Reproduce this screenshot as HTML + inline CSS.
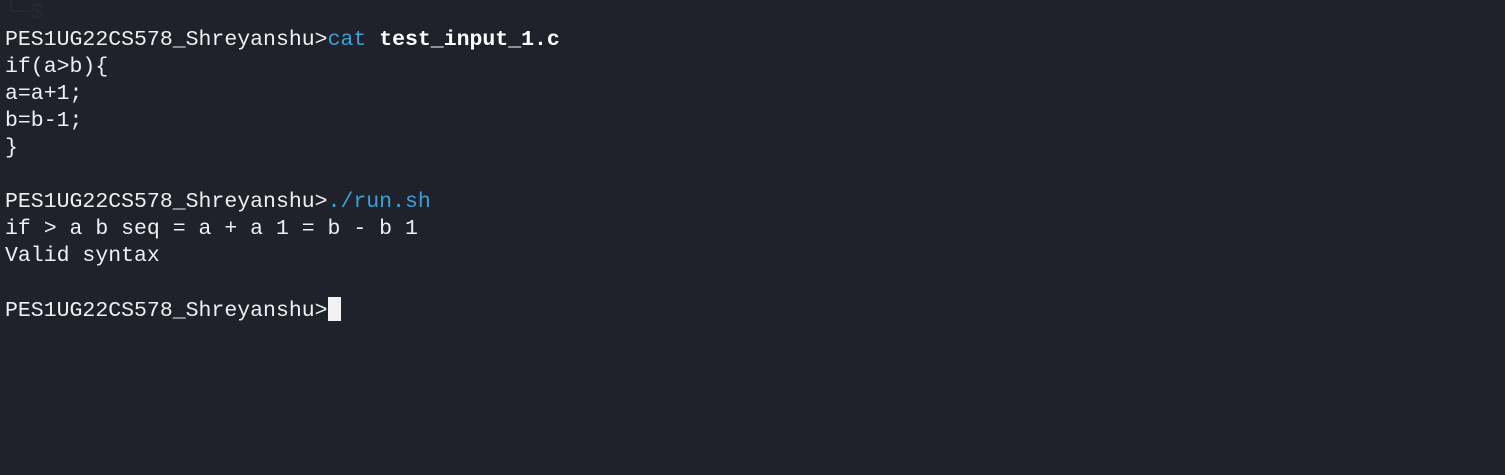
<!DOCTYPE html>
<html><head><style>
html,body{margin:0;padding:0;width:1505px;height:475px;overflow:hidden;background:#1f222a;}
pre{margin:0;position:absolute;left:5px;top:-27px;font-family:"Liberation Mono",monospace;font-size:21.5px;line-height:27px;color:#eef0f2;}
.b{color:#3d9fd8}.w{font-weight:bold;color:#fff}
.f{color:#262a33}
.cur{display:inline-block;width:13px;height:24px;background:#f2f2f2;vertical-align:-5px}
</style></head><body>
<pre><span class="f">┌──(jarvis002㉿kali)-[~]
└─$ </span>
PES1UG22CS578_Shreyanshu&gt;<span class="b">cat</span> <span class="w">test_input_1.c</span>
if(a&gt;b){
a=a+1;
b=b-1;
}

PES1UG22CS578_Shreyanshu&gt;<span class="b">./run.sh</span>
if &gt; a b seq = a + a 1 = b - b 1
Valid syntax

PES1UG22CS578_Shreyanshu&gt;<span class="cur"></span></pre>
</body></html>
